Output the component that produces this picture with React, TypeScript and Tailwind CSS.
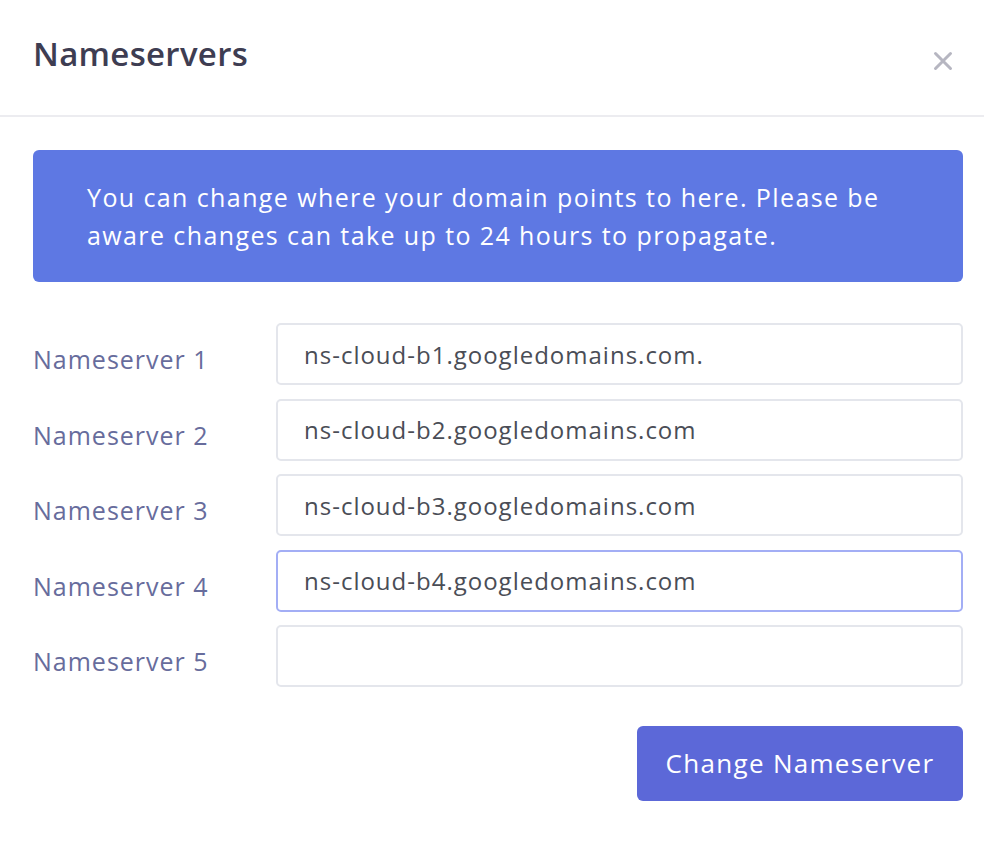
import React from "react";

const SERVERS = [
  "ns-cloud-b1.googledomains.com.",
  "ns-cloud-b2.googledomains.com",
  "ns-cloud-b3.googledomains.com",
  "ns-cloud-b4.googledomains.com",
  "",
];

function CloseIcon() {
  return (
    <svg width="20" height="20" viewBox="0 0 20 20" fill="none">
      <path d="M2.5 2.5 L17.5 17.5 M17.5 2.5 L2.5 17.5" stroke="#b6b6c1" strokeWidth="3" strokeLinecap="round" />
    </svg>
  );
}

export default function App() {
  return (
    <div className="min-h-screen w-full bg-white font-['Open_Sans',sans-serif]">
      {/* Header */}
      <div className="flex h-[117px] items-start justify-between border-b-2 border-[#ececf0] pl-[33px] pr-[31px]">
        <h1 className="mt-[30px] text-[33px] font-semibold leading-[48px] tracking-[0.3px] text-[#3e3d52]">
          Nameservers
        </h1>
        <button className="mt-[51px]">
          <CloseIcon />
        </button>
      </div>

      <div className="pl-[33px] pr-[21px] pt-[33px]">
        {/* Notice */}
        <div className="rounded-md bg-[#5e78e3] px-[54px] py-[28px] text-[25px] leading-[38px] tracking-[1.4px] text-white">
          You can change where your domain points to here. Please be aware changes can take up to 24 hours to
          propagate.
        </div>

        {/* Fields */}
        <div className="mt-[41px] flex flex-col gap-[13.5px]">
          {SERVERS.map((value, i) => (
            <div key={i} className="flex items-center">
              <label className="w-[243px] shrink-0 pt-3 text-[25px] tracking-[1px] text-[#676c9c]">
                Nameserver {i + 1}
              </label>
              <input
                defaultValue={value}
                className={
                  "h-[62px] w-full rounded-[5px] border-2 bg-white pl-[26px] text-[24px] tracking-[1px] text-[#4a4d56] outline-none " +
                  (i === 3 ? "border-[#a3aef5]" : "border-[#e4e6ec]")
                }
              />
            </div>
          ))}
        </div>

        {/* Submit */}
        <div className="mt-[39px] flex justify-end">
          <button className="h-[75px] w-[326px] rounded-md bg-[#5c68d8] text-[26px] tracking-[1.3px] text-white">
            Change Nameserver
          </button>
        </div>
      </div>
    </div>
  );
}
